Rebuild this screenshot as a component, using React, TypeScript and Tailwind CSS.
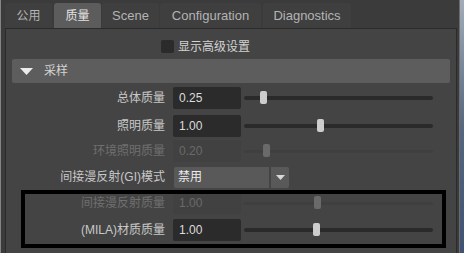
const tabs = [
  { label: "公用", w: "w-[47px]", ml: "ml-0", cjk: true },
  { label: "质量", w: "w-[47px]", ml: "ml-[2px]", cjk: true, active: true },
  { label: "Scene", w: "w-[57px]", ml: "ml-px" },
  { label: "Configuration", w: "w-[101px]", ml: "ml-px" },
  { label: "Diagnostics", w: "w-[88px]", ml: "ml-[2px]" },
];

type Row = {
  label: string;
  value: string;
  thumb: number;
  disabled?: boolean;
  mt: string;
};

const rows: Row[] = [
  { label: "总体质量", value: "0.25", thumb: 16, mt: "mt-[4px]" },
  { label: "照明质量", value: "1.00", thumb: 73, mt: "mt-[6px]" },
  { label: "环境照明质量", value: "0.20", thumb: 19, disabled: true, mt: "mt-[3px]" },
];

const rows2: Row[] = [
  { label: "间接漫反射质量", value: "1.00", thumb: 70, disabled: true, mt: "mt-[4px]" },
  { label: "(MILA)材质质量", value: "1.00", thumb: 69, mt: "mt-[5px]" },
];

function Slider({ thumb, disabled }: { thumb: number; disabled?: boolean }) {
  return (
    <div className="relative ml-[3px] w-[189px] h-[22px] flex items-center">
      <div
        className={
          disabled
            ? "w-full h-[3px] rounded-full bg-[#3f3f3f]"
            : "w-full h-[4px] rounded-full bg-[#2a2a2a]"
        }
      />
      <div
        className={
          disabled
            ? "absolute top-[4px] w-[7px] h-[13px] rounded-[2px] bg-[#6a6a6a]"
            : "absolute top-[4px] w-[7px] h-[13px] rounded-[2px] bg-[#cdcdcd]"
        }
        style={{ left: thumb }}
      />
    </div>
  );
}

function FieldRow({ row }: { row: Row }) {
  return (
    <div className={`flex items-center h-[22px] ${row.mt}`}>
      <div
        className={`w-[159px] text-right text-[12px] ${
          row.disabled ? "text-[#6f6f6f]" : "text-[#c8c8c8]"
        }`}
      >
        {row.label}
      </div>
      <div
        className={`ml-[8px] w-[68px] h-[22px] rounded-[2px] flex items-center pl-[6px] text-[12px] ${
          row.disabled ? "bg-[#414141] text-[#6a6a6a]" : "bg-[#2b2b2b] text-[#dcdcdc]"
        }`}
      >
        {row.value}
      </div>
      <Slider thumb={row.thumb} disabled={row.disabled} />
    </div>
  );
}

export default function App() {
  return (
    <div className="w-[464px] h-[253px] overflow-hidden flex bg-[#3b3b3b] font-['Liberation_Sans','Noto_Sans_CJK_SC',sans-serif]">
      <div className="w-px bg-[#858585]" />
      <div className="flex-1 flex flex-col pl-[4px] pr-[2px] pt-[3px]">
        <div className="flex h-[25px]">
          {tabs.map((t) => (
            <div
              key={t.label}
              className={`${t.w} ${t.ml} h-full rounded-t-[3px] flex items-center justify-center ${
                t.cjk ? "text-[12px]" : "text-[13px]"
              } ${t.active ? "bg-[#5c5c5c] text-[#e2e2e2]" : "bg-[#3f3f3f] text-[#b4b4b4]"}`}
            >
              {t.label}
            </div>
          ))}
        </div>
        <div className="relative flex-1 flex flex-col border border-b-0 border-[#2b2b2b] bg-[#444444]">
          <div className="mt-[11px] pl-[155px] flex items-center h-[13px]">
            <div className="w-[13px] h-[13px] rounded-[2px] bg-[#2b2b2b]" />
            <span className="ml-[4px] text-[12px] text-[#d2d2d2]">显示高级设置</span>
          </div>
          <div className="mt-[6px] mx-[6px] h-[24px] rounded-[2px] bg-[#5d5d5d] flex items-center pl-[8px]">
            <svg width="13" height="7" viewBox="0 0 13 7">
              <polygon points="0,0 13,0 6.5,7" fill="#ececec" />
            </svg>
            <span className="ml-[11px] text-[12px] text-[#d4d4d4]">采样</span>
          </div>
          {rows.map((r) => (
            <FieldRow key={r.label} row={r} />
          ))}
          <div className="flex items-center h-[22px] mt-[4px]">
            <div className="w-[159px] text-right text-[12px] text-[#c8c8c8]">间接漫反射(GI)模式</div>
            <div className="ml-[9px] w-[95px] h-[21px] rounded-l-[2px] bg-[#595959] flex items-center pl-[4px] text-[12px] text-[#ececec]">
              禁用
            </div>
            <div className="ml-[2px] w-[18px] h-[21px] rounded-r-[2px] bg-[#595959] flex items-center justify-center">
              <svg width="9" height="5" viewBox="0 0 9 5">
                <polygon points="0,0 9,0 4.5,5" fill="#d8d8d8" />
              </svg>
            </div>
          </div>
          {rows2.map((r) => (
            <FieldRow key={r.label} row={r} />
          ))}
          <div className="absolute left-[15px] top-[161px] w-[425px] h-[58px] border-4 border-black pointer-events-none" />
        </div>
      </div>
      <div className="w-px bg-[#6c6c6c]" />
      <div className="w-[4px] bg-gradient-to-b from-[#a3adba] via-[#56677f] to-[#3f5272]" />
    </div>
  );
}
